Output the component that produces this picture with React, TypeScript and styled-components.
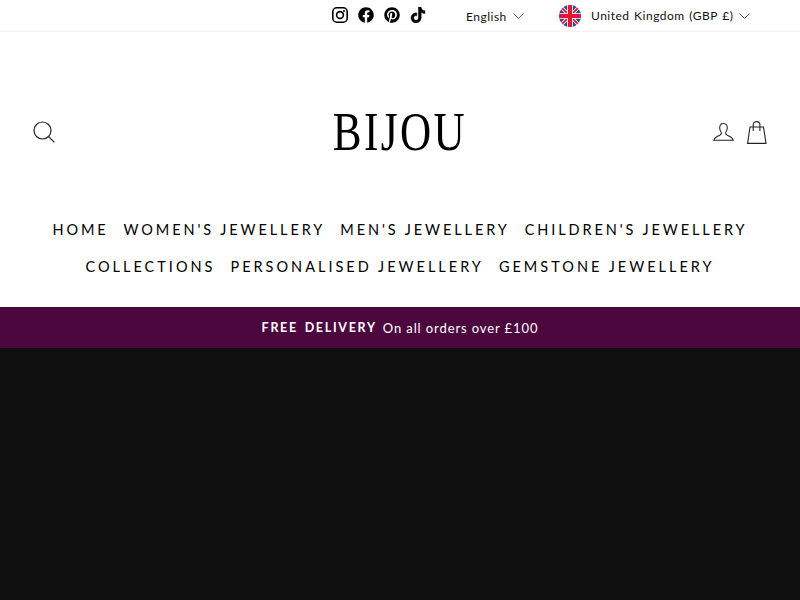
import React from "react";
import styled, { createGlobalStyle } from "styled-components";
import { FaFacebook, FaPinterest, FaTiktok } from "react-icons/fa";

const GlobalStyle = createGlobalStyle`
  html, body {
    margin: 0;
    padding: 0;
    height: 100%;
    overflow: hidden;
    background: #fff;
    font-family: "Lato", "Liberation Sans", sans-serif;
    color: #000;
  }
`;

const Page = styled.div`
  width: 800px;
  height: 600px;
  display: flex;
  flex-direction: column;
  overflow: hidden;
`;

const TopBar = styled.div`
  height: 31px;
  border-bottom: 1px solid #f2f2f2;
  display: flex;
  align-items: center;
  flex-shrink: 0;
  padding-left: 332px;
`;

const Socials = styled.div`
  display: flex;
  align-items: center;
  gap: 10px;
  color: #000;
  width: 134px;
  margin-top: -2px;
  svg {
    width: 16px;
    height: 16px;
    display: block;
  }
`;

const TikTok = styled(FaTiktok)`
  stroke: #000;
  stroke-width: 14px;
`;

const Picker = styled.div<{ $width: number; $drop?: number }>`
  display: flex;
  align-items: center;
  width: ${({ $width }) => $width}px;
  padding-top: ${({ $drop }) => $drop ?? 0}px;
  font-size: 12px;
  letter-spacing: 0.5px;
  word-spacing: 1px;
  color: #111;
`;

const PickerLabel = styled.span`
  white-space: nowrap;
`;

const Chevron = styled.svg`
  width: 11px;
  height: 6px;
  margin-left: 6px;
  flex-shrink: 0;
`;

const FlagWrap = styled.svg`
  width: 22px;
  height: 22px;
  margin-right: 10px;
  flex-shrink: 0;
`;

const Header = styled.header`
  height: 176px;
  box-sizing: border-box;
  padding: 24px 33px 0;
  display: grid;
  grid-template-columns: 1fr auto 1fr;
  align-items: center;
  flex-shrink: 0;
`;

const Logo = styled.div`
  font-family: "Liberation Serif", serif;
  font-size: 54px;
  letter-spacing: 3px;
  line-height: 1;
  color: #000;
  transform: scaleX(0.8);
`;

const IconLeft = styled.div`
  display: flex;
  justify-content: flex-start;
`;

const IconRight = styled.div`
  display: flex;
  justify-content: flex-end;
  align-items: center;
  gap: 13px;
`;

const Nav = styled.nav`
  height: 99px;
  box-sizing: border-box;
  padding-top: 3px;
  flex-shrink: 0;
  display: flex;
  flex-direction: column;
  align-items: center;
`;

const NavRow = styled.div<{ $spacing: number }>`
  height: 37px;
  display: flex;
  align-items: center;
  gap: 15px;
  letter-spacing: ${({ $spacing }) => $spacing}px;
`;

const NavLink = styled.a`
  font-size: 14.5px;
  white-space: nowrap;
  color: #000;
`;

const Announcement = styled.div`
  height: 41px;
  background: #4d073f;
  color: #fff;
  display: flex;
  align-items: center;
  justify-content: center;
  gap: 6px;
  font-size: 13px;
  letter-spacing: 0.9px;
  flex-shrink: 0;
`;

const Strong = styled.span`
  font-size: 12.5px;
  font-weight: 700;
  letter-spacing: 1.7px;
  word-spacing: 2px;
`;

const Hero = styled.div`
  flex: 1;
  background: #0f0f0f;
`;

const ChevronIcon = () => (
  <Chevron viewBox="0 0 11 6" fill="none" stroke="#444" strokeWidth="0.9">
    <path d="M0.5 0.5 L5.5 5.5 L10.5 0.5" />
  </Chevron>
);

const UkFlag = () => (
  <FlagWrap viewBox="0 0 22 22">
    <defs>
      <clipPath id="flag-circle">
        <circle cx="11" cy="11" r="11" />
      </clipPath>
    </defs>
    <g clipPath="url(#flag-circle)">
      <rect width="22" height="22" fill="#2a4b9b" />
      <path d="M0 0 L22 22 M22 0 L0 22" stroke="#fff" strokeWidth="3.4" />
      <path d="M0 0 L22 22 M22 0 L0 22" stroke="#e2162f" strokeWidth="1.8" />
      <path d="M11 0 V22 M0 11 H22" stroke="#fff" strokeWidth="5.6" />
      <path d="M11 0 V22 M0 11 H22" stroke="#e2162f" strokeWidth="4" />
    </g>
  </FlagWrap>
);

const InstagramIcon = () => (
  <svg viewBox="0 0 16 16" fill="none" stroke="#000" strokeWidth="1.6">
    <rect x="0.8" y="0.8" width="14.4" height="14.4" rx="4" />
    <circle cx="8" cy="8" r="3.4" />
    <circle cx="12" cy="4" r="1" fill="#000" stroke="none" />
  </svg>
);

const SearchIcon = () => (
  <svg width="22" height="22" viewBox="0 0 22 22" fill="none" stroke="#222" strokeWidth="1.2">
    <circle cx="9.5" cy="9.5" r="8.5" />
    <path d="M15.6 15.6 L21.4 21.4" />
  </svg>
);

const UserIcon = () => (
  <svg width="21" height="20" viewBox="0 0 22 20" fill="none" stroke="#222" strokeWidth="1.1">
    <path d="M11 1 C8.2 1 7 3.2 7 5.8 C7 8 8 9.6 8.8 10.8 C9 12 8.4 12.8 7 13.5 C4.5 14.6 1.8 15.6 0.8 18.6 H21.2 C20.2 15.6 17.5 14.6 15 13.5 C13.6 12.8 13 12 13.2 10.8 C14 9.6 15 8 15 5.8 C15 3.2 13.8 1 11 1 Z" />
  </svg>
);

const BagIcon = () => (
  <svg width="20" height="23" viewBox="0 0 20 23" fill="none" stroke="#222" strokeWidth="1.1">
    <path d="M3 6 H16.5 L19 22.4 H0.6 Z" />
    <path d="M6.2 10 V3.6 C6.2 1.6 7.6 0.6 9.6 0.6 C11.6 0.6 12.9 1.6 12.9 3.6 V10" />
  </svg>
);

export default function App() {
  return (
    <Page>
      <GlobalStyle />
      <TopBar>
        <Socials>
          <InstagramIcon />
          <FaFacebook />
          <FaPinterest />
          <TikTok />
        </Socials>
        <Picker $width={93} $drop={1}>
          <PickerLabel>English</PickerLabel>
          <ChevronIcon />
        </Picker>
        <Picker $width={195}>
          <UkFlag />
          <PickerLabel>United Kingdom (GBP £)</PickerLabel>
          <ChevronIcon />
        </Picker>
      </TopBar>
      <Header>
        <IconLeft>
          <SearchIcon />
        </IconLeft>
        <Logo>BIJOU</Logo>
        <IconRight>
          <UserIcon />
          <BagIcon />
        </IconRight>
      </Header>
      <Nav>
        <NavRow $spacing={2.9}>
          <NavLink>HOME</NavLink>
          <NavLink>WOMEN'S JEWELLERY</NavLink>
          <NavLink>MEN'S JEWELLERY</NavLink>
          <NavLink>CHILDREN'S JEWELLERY</NavLink>
        </NavRow>
        <NavRow $spacing={3}>
          <NavLink>COLLECTIONS</NavLink>
          <NavLink>PERSONALISED JEWELLERY</NavLink>
          <NavLink>GEMSTONE JEWELLERY</NavLink>
        </NavRow>
      </Nav>
      <Announcement>
        <Strong>FREE DELIVERY</Strong>
        <span>On all orders over £100</span>
      </Announcement>
      <Hero />
    </Page>
  );
}
